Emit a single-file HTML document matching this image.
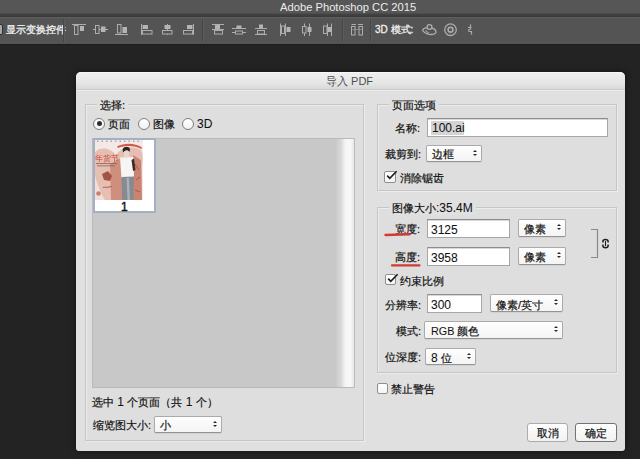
<!DOCTYPE html>
<html><head><meta charset="utf-8">
<style>
*{box-sizing:border-box;margin:0;padding:0}
html,body{width:640px;height:459px;overflow:hidden;background:#232323}
body{position:relative;font-family:"Liberation Sans",sans-serif;color:#111}
.a{position:absolute}
#titlebar{left:0;top:0;width:640px;height:17px;background:linear-gradient(#575757 0,#555555 13px,#434343 14px,#3b3b3b 16.5px)}
#titlebar .t{left:280px;top:1px;font-size:11.2px;color:#ececec;line-height:12px;white-space:nowrap}
#toolbar{left:0;top:17px;width:640px;height:27px;background:#545454;border-top:1px solid #5f5f5f;box-shadow:0 1px 0 #1c1c1c}
.tt{color:#f0f0f0;font-size:9.7px;line-height:12px;white-space:nowrap;-webkit-text-stroke:0.3px #f0f0f0}
.sep{width:2px;height:23px;top:19px;border-left:1px solid #464646;border-right:1px solid #5c5c5c}
#dark{left:0;top:43px;width:640px;height:416px;background:#222}
#dlg{left:76px;top:72px;width:549px;height:379px;background:#e0e0e0;border-radius:5px 5px 3px 3px;box-shadow:0 0 6px rgba(0,0,0,.5)}
#dtitle{left:76px;top:72px;width:549px;height:18px;background:linear-gradient(#eeeeee,#e6e6e6 60%,#d9d9d9);border-radius:5px 5px 0 0;border-bottom:1px solid #cccccc;border-top:1px solid #f6f6f6;box-shadow:0 1px 0 #ebebeb}
#dtitle .t{left:250px;top:2px;font-size:11px;color:#4e4e4e;line-height:13px;white-space:nowrap}
.grp{border:1px solid #c6c6c6;box-shadow:inset 1px 1px 0 #ececec,1px 1px 0 #ececec;background:#dedede}
.lbl{font-size:11px;line-height:14px;color:#111;white-space:nowrap;-webkit-text-stroke:0.2px #111}
.en{font-size:12px;-webkit-text-stroke:0.05px #111}
.gl{background:#e0e0e0;padding:0 3px}
.inp{background:#fff;border:1px solid #a6a6a6;border-top-color:#8c8c8c;box-shadow:inset 0 1px 0 #d8d8d8}
.sel{background:linear-gradient(#fefefe,#f4f4f4);border:1px solid #aaaaaa;border-bottom-color:#939393;border-radius:2px;box-shadow:0 1px 1px rgba(0,0,0,.06)}
.arr{position:absolute;right:4px;top:50%;width:4px;height:6px;margin-top:-4px}
.arr:before,.arr:after{content:"";position:absolute;left:0;border-left:2px solid transparent;border-right:2px solid transparent}
.arr:before{top:0;border-bottom:2.5px solid #2a2a2a}
.arr:after{bottom:0;border-top:2.5px solid #2a2a2a}
.cb{width:12px;height:12px;background:linear-gradient(#fff,#f4f4f4);border:1px solid #8e8e8e;border-radius:2px}
.ck{position:absolute;left:-1px;top:-3px;width:14px;height:14px}
.rad{width:12px;height:12px;border-radius:50%;background:linear-gradient(#fff,#f2f2f2);border:1px solid #7e7e7e}
.btn{background:linear-gradient(#fefefe,#f2f2f2);border:1px solid #ababab;border-radius:3px;text-align:center}
.ic{position:absolute;top:23px}
</style></head><body>
<div id="titlebar" class="a"><div class="a t">Adobe Photoshop CC 2015</div></div>
<div id="toolbar" class="a"></div>
<div class="a" style="left:-8px;top:24px;width:11px;height:11px;background:#a8a8a8;border:1px solid #2e2e2e;border-radius:2px"></div>
<div class="a tt" style="left:6px;top:24px">显示变换控件</div>
<div class="a sep" style="left:63px"></div>
<div class="a sep" style="left:202px"></div>
<div class="a sep" style="left:342px"></div>
<div class="a sep" style="left:370px"></div>
<svg class="a" style="left:0;top:17px;filter:blur(0.35px)" width="640" height="26" viewBox="0 17 640 26" fill="none" stroke="#adadad" stroke-width="1">
<!-- 1 align top -->
<path d="M72 24.5H86"/><rect x="74.5" y="25.5" width="3.5" height="9"/><rect x="80" y="26" width="4" height="5" fill="#b4b4b4" stroke="none"/>
<!-- 2 align vcenter -->
<path d="M93 29.5H108"/><rect x="95.5" y="25.5" width="3.5" height="8" fill="#545454"/><rect x="101" y="26.5" width="4.5" height="5.5" fill="#b4b4b4" stroke="none"/>
<!-- 3 align bottom -->
<path d="M115 34.5H128"/><rect x="117.5" y="24.5" width="3.5" height="8.5"/><rect x="122.5" y="27" width="4.5" height="6" fill="#b4b4b4" stroke="none"/>
<!-- 4 align left -->
<path d="M141.5 24V35"/><rect x="142.5" y="25" width="5.5" height="4" fill="#b4b4b4" stroke="none"/><rect x="142.5" y="30.5" width="9.5" height="3.5"/>
<!-- 5 align hcenter -->
<path d="M167.5 24V35"/><rect x="164.5" y="25" width="6" height="4" fill="#b4b4b4" stroke="none"/><rect x="162.5" y="30.5" width="9.5" height="3.5" fill="#545454"/>
<!-- 6 align right -->
<path d="M193.5 24V35"/><rect x="187" y="25" width="5.5" height="4" fill="#b4b4b4" stroke="none"/><rect x="183.5" y="30.5" width="9" height="3.5"/>
<!-- 7 dist top -->
<path d="M212 24.5H224M212 29.5H224"/><rect x="215" y="25" width="5" height="4" fill="#b4b4b4" stroke="none"/><rect x="214.5" y="30.5" width="8" height="3.5"/>
<!-- 8 dist vcenter -->
<path d="M232 28.5H246M232 32.5H246"/><rect x="236.5" y="25.5" width="5" height="3.5" fill="#b4b4b4" stroke="none"/><rect x="235.5" y="31" width="7" height="3" fill="#545454"/>
<!-- 9 dist bottom -->
<path d="M255 28.5H267M255 34.5H267"/><rect x="259" y="24.5" width="4" height="4" fill="#b4b4b4" stroke="none"/><rect x="257.5" y="30.5" width="7" height="3.5"/>
<!-- 10 dist left -->
<path d="M280.5 23.5V36M285.5 23.5V36"/><rect x="281.5" y="26" width="3" height="7.5"/><rect x="286.5" y="27" width="4" height="5" fill="#b4b4b4" stroke="none"/>
<!-- 11 dist hcenter -->
<path d="M304.5 23.5V36M309.5 23.5V36"/><rect x="302.5" y="26.5" width="3.5" height="6.5" fill="#545454"/><rect x="307.5" y="27" width="4" height="5" fill="#b4b4b4" stroke="none"/>
<!-- 12 dist right -->
<path d="M327.5 23.5V36M331.5 23.5V36"/><rect x="323.5" y="26" width="3.5" height="7.5"/><rect x="328" y="27" width="3.5" height="5" fill="#b4b4b4" stroke="none"/>
<!-- 13 distribute spacing -->
<path d="M351.5 24.5H356M358 24.5H363"/><rect x="351.5" y="26.5" width="3.5" height="8.5"/><rect x="359" y="26.5" width="3.5" height="8.5"/><path d="M351.5 29.5H363" stroke-dasharray="1 1"/>
<!-- 3d icons -->
<path d="M422.5 30.5c1-2.5 3.5-3 5-2.5M431.5 28c2.5 0.5 4.5 2.5 4.5 4.5c-1 2-5 2.5-8 1.5c-2.5-0.5-4.5-2-5.5-3.5" stroke-width="1.3"/><circle cx="429.5" cy="27" r="2.4" stroke-width="1.3"/><path d="M425 30.5l4 2.5" />
<circle cx="450.5" cy="29.7" r="5.8" stroke-width="1.3"/><circle cx="450.5" cy="29.7" r="2.4" stroke-width="1.6"/>
<path d="M470.5 24.5v3M468 27.5h3.5M471 28.5l-3 2M468.5 31.5h3v3" stroke-width="1.2"/>
</svg>
<div class="a tt" style="left:375px;top:24px;font-size:10px">3D 模式:</div>

<div id="dlg" class="a"></div>
<div id="dtitle" class="a"><div class="a t">导入 PDF</div></div>

<!-- left group -->
<div class="a grp" style="left:85px;top:104px;width:279px;height:337px"></div>
<div class="a lbl gl" style="left:97px;top:98px">选择:</div>
<div class="a rad" style="left:93px;top:118px"><div class="a" style="left:2.5px;top:2.3px;width:5px;height:5px;border-radius:50%;background:#2e2e2e"></div></div>
<div class="a lbl" style="left:108px;top:117px">页面</div>
<div class="a rad" style="left:138px;top:118px"></div>
<div class="a lbl" style="left:153px;top:117px">图像</div>
<div class="a rad" style="left:182px;top:118px"></div>
<div class="a lbl" style="left:197px;top:117px"><span class="en">3D</span></div>
<div class="a" style="left:92px;top:138px;width:263px;height:250px;background:#c8c8c8;border:1px solid #bababa"></div>
<div class="a" style="left:336px;top:139px;width:18px;height:248px;background:linear-gradient(90deg,#cacaca,#dadada 30%,#f3f3f3 50%,#f8f8f8 80%,#e6e6e6)"></div>
<div class="a" style="left:93px;top:138px;width:63px;height:75px;background:#fff;border:2px solid #a5b0c4"></div>
<svg class="a" style="left:95px;top:140px;filter:blur(0.35px)" width="48" height="60" viewBox="0 0 48 60">
<rect width="48" height="60" fill="#f3e9e6"/>
<path d="M0 12C6 6 16 8 21 15C26 7 38 5 46 10C48 14 48 20 47 26V60H8C3 52 0 42 0 32Z" fill="#e6beb2"/>
<path d="M0 36C3 46 6 54 10 60H0Z" fill="#f0dfda"/>
<path d="M22 6.5C30 2.5 40 3 47 7.5L46.5 9C40 5.5 31 5 23 8Z" fill="#cf5a4c"/>
<path d="M15 24L26 18L28 60H16Z" fill="#cf8f7d"/>
<path d="M38 15L46 20L47 60H38Z" fill="#cc8472"/>
<path d="M40 24l4 6M41 40l4-3M40 50l5 2" stroke="#a85a4a" stroke-width="1" fill="none"/>
<path d="M25 17.5L38.5 17L39 37L26.5 37.5Z" fill="#f7f5f3"/>
<path d="M26.5 37L39 36.5L38.5 60H27Z" fill="#858a93"/>
<path d="M31.5 38L32.5 60H35L34 38Z" fill="#aab0b8"/>
<path d="M29 10C30.5 8.5 33 8.5 34 10.5L34 16C32.5 18 30 18 29 16Z" fill="#ead6cc"/>
<path d="M27.5 10C28 6.5 33.5 5.5 35 9L34.5 12C33 9.5 30 9.5 28.5 12.5Z" fill="#2c221f"/>
<path d="M36.5 20L39 18.5L40.5 30L38 31Z" fill="#3a2c28"/>
<path d="M7 34L13 31L17 36L15 41L9 40Z" fill="#a25545"/>
<text x="0.3" y="21" font-size="8.2" fill="#c0463a" font-family="Liberation Sans,sans-serif">年货节</text>
<path d="M1 23.5H22M2 25.8H20" stroke="#8a6058" stroke-width="0.8"/>
<path d="M2 1.2H46" stroke="#7a7a7a" stroke-width="0.9" stroke-dasharray="1.5 3"/>
<circle cx="3.5" cy="53.5" r="2.3" fill="#c98070"/>
<path d="M8 47.5c2-1 4 0.5 6-0.5s3 0 3 0" stroke="#a06050" stroke-width="1" fill="none"/>
</svg>
<div class="a lbl" style="left:121px;top:200px;font-size:12px;-webkit-text-stroke:0.4px #111">1</div>
<div class="a lbl" style="left:92px;top:395px">选中<span class="en"> 1 </span>个页面（共<span class="en"> 1 </span>个）</div>
<div class="a lbl" style="left:93px;top:418px">缩览图大小:</div>
<div class="a sel" style="left:154px;top:416px;width:68px;height:17px"><div class="a lbl" style="left:5px;top:1px">小</div><div class="arr"></div></div>

<!-- right group 1 -->
<div class="a grp" style="left:377px;top:104px;width:240px;height:87px"></div>
<div class="a lbl gl" style="left:389px;top:98px">页面选项</div>
<div class="a lbl" style="left:395px;top:121px">名称:</div>
<div class="a inp" style="left:427px;top:118px;width:181px;height:19px"><div class="a" style="left:3px;top:2px;width:33px;height:14px;background:#d2d4d6"></div><div class="a lbl" style="left:4px;top:2px"><span class="en">100.ai</span></div></div>
<div class="a lbl" style="left:385px;top:147px">裁剪到:</div>
<div class="a sel" style="left:426px;top:145px;width:56px;height:17px"><div class="a lbl" style="left:5px;top:1px">边框</div><div class="arr"></div></div>
<div class="a cb" style="left:384px;top:171px"><svg class="ck" viewBox="0 0 14 14"><path d="M3.2 6.6L5.8 9.4L12.6 2.2" stroke="#1c1c1c" stroke-width="1.6" fill="none"/></svg></div>
<div class="a lbl" style="left:400px;top:171px">消除锯齿</div>

<!-- right group 2 -->
<div class="a grp" style="left:377px;top:207px;width:240px;height:166px"></div>
<div class="a lbl gl" style="left:389px;top:201px">图像大小<span class="en">:35.4M</span></div>
<div class="a lbl" style="left:395px;top:222px">宽度:</div>
<svg class="a" style="left:380px;top:230px" width="34" height="8"><path d="M5.5 5Q17 4.6 29.5 4.2" stroke="#d23a33" stroke-width="2.4" stroke-linecap="round" fill="none"/></svg>
<div class="a inp" style="left:427px;top:219px;width:83px;height:19px"><div class="a lbl" style="left:3px;top:3px"><span class="en">3125</span></div></div>
<div class="a sel" style="left:518px;top:219px;width:48px;height:18px"><div class="a lbl" style="left:5px;top:2px">像素</div><div class="arr"></div></div>
<div class="a lbl" style="left:395px;top:250px">高度:</div>
<svg class="a" style="left:386px;top:261px" width="38" height="8"><path d="M6 4.4Q20 4.4 33.5 4.4" stroke="#d23a33" stroke-width="2.2" stroke-linecap="round" fill="none"/></svg>
<div class="a inp" style="left:427px;top:247px;width:83px;height:19px"><div class="a lbl" style="left:3px;top:3px"><span class="en">3958</span></div></div>
<div class="a sel" style="left:518px;top:247px;width:48px;height:18px"><div class="a lbl" style="left:5px;top:2px">像素</div><div class="arr"></div></div>
<svg class="a" style="left:588px;top:227px" width="24" height="34" fill="none"><path d="M3 2.5H9.5V30.5H3" stroke="#8a8a8a" stroke-width="1.2"/><path d="M14.9 15.6V14.4a2.6 2 0 0 1 5.2 0V15.6M14.9 17.6V18.8a2.6 2 0 0 0 5.2 0V17.6" stroke="#1e1e1e" stroke-width="1.5"/><path d="M17.5 14V19.2" stroke="#1e1e1e" stroke-width="1.1"/></svg>
<div class="a cb" style="left:385px;top:274px;width:11px;height:11px"><svg class="ck" viewBox="0 0 14 14"><path d="M3.2 6.6L5.8 9.4L12.6 2.2" stroke="#1c1c1c" stroke-width="1.6" fill="none"/></svg></div>
<div class="a lbl" style="left:400px;top:274px">约束比例</div>
<div class="a lbl" style="left:385px;top:298px">分辨率:</div>
<div class="a inp" style="left:427px;top:294px;width:55px;height:19px"><div class="a lbl" style="left:3px;top:3px"><span class="en">300</span></div></div>
<div class="a sel" style="left:490px;top:294px;width:73px;height:18px"><div class="a lbl" style="left:5px;top:3px">像素/英寸</div><div class="arr"></div></div>
<div class="a lbl" style="left:396px;top:324px">模式:</div>
<div class="a sel" style="left:424px;top:321px;width:139px;height:18px"><div class="a lbl" style="left:6px;top:2px"><span class="en" style="font-size:10.8px">RGB </span>颜色</div><div class="arr"></div></div>
<div class="a lbl" style="left:385px;top:350px">位深度:</div>
<div class="a sel" style="left:425px;top:348px;width:51px;height:17px"><div class="a lbl" style="left:5px;top:2px"><span class="en">8 </span>位</div><div class="arr"></div></div>
<div class="a cb" style="left:377px;top:383px;width:11px;height:11px"></div>
<div class="a lbl" style="left:391px;top:382px">禁止警告</div>

<div class="a btn" style="left:527px;top:423px;width:41px;height:19px"><div class="lbl" style="margin-top:2px">取消</div></div>
<div class="a btn" style="left:575px;top:423px;width:42px;height:19px;border-color:#737373"><div class="lbl" style="margin-top:2px">确定</div></div>
</body></html>
